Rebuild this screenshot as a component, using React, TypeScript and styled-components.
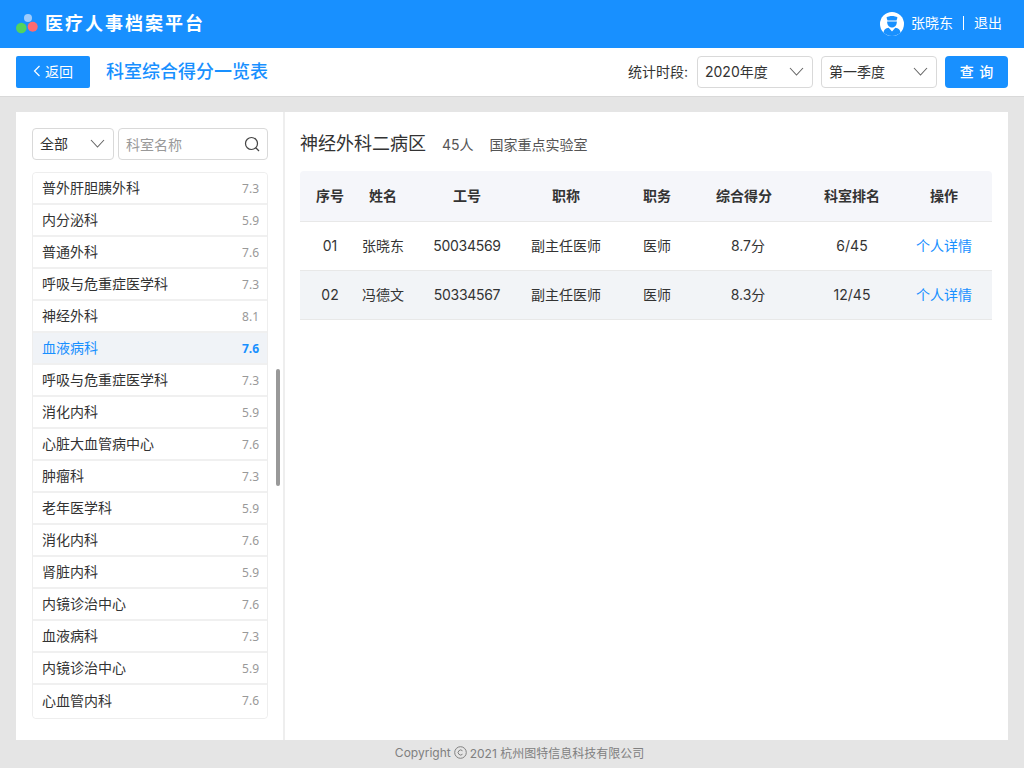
import React from "react";
import styled, { createGlobalStyle } from "styled-components";

const Global = createGlobalStyle`
  html, body { margin: 0; padding: 0; }
  body { width: 1024px; height: 768px; overflow: hidden; background: #e5e5e5; font-family: "Inter", "Noto Sans CJK SC", sans-serif; color: #333; }
  * { box-sizing: border-box; }
`;
const Page = styled.div`display: flex; flex-direction: column; width: 1024px; height: 768px;`;
const Header = styled.header`height: 48px; background: #1890ff; display: flex; align-items: center; justify-content: space-between; padding: 0 22px 0 16px; color: #fff;`;
const Brand = styled.div`display: flex; align-items: center; gap: 5px;`;
const BrandName = styled.span`font-size: 18px; font-weight: 700; letter-spacing: 2px; line-height: 24px;`;
const User = styled.div`display: flex; align-items: center; font-size: 14px; line-height: 22px;`;
const UserName = styled.span`margin: 0 0 2px 7px;`;
const LogoutText = styled.span`margin-bottom: 2px;`;
const Sep = styled.span`width: 1px; height: 14px; background: #fff; margin: 0 10px 2px 10px;`;
const SubBar = styled.div`height: 49px; background: #fff; border-bottom: 1px solid #d9d9d9; display: flex; align-items: center; padding: 0 16px 1px; `;
const BackButton = styled.button`width: 74px; height: 32px; background: #1890ff; border: 0; border-radius: 2px; color: #fff; font: inherit; font-size: 14px; display: flex; align-items: center; justify-content: center; gap: 4px; padding: 0 0 2px;`;
const PageTitle = styled.h1`margin: 0 0 3px 16px; font-size: 18px; font-weight: 500; color: #1890ff; flex: 1;`;
const FilterLabel = styled.span`font-size: 14px; color: #333; margin: 0 9px 2px 0;`;
const SelectBox = styled.div<{ $w: number; $mr?: number }>`
  width: ${p => p.$w}px; height: 32px; border: 1px solid #d9d9d9; border-radius: 4px; background: #fff;
  display: flex; align-items: center; justify-content: space-between; padding: 0 8px 2px 7px; font-size: 14px; color: #333;
  margin-right: ${p => p.$mr ?? 0}px; flex: none;
`;
const QueryButton = styled.button`width: 63px; height: 32px; margin-left: 8px; background: #1890ff; border: 0; border-radius: 4px; color: #fff; font: inherit; font-size: 14px; font-weight: 500; padding: 0 0 2px; word-spacing: 2px;`;
const Main = styled.main`flex: 1; padding: 15px 16px 0; display: flex; min-height: 0;`;
const Panel = styled.div`flex: 1; background: #fff; display: flex;`;
const Side = styled.aside`border-right: 2px solid #eeeeee; width: 269px; padding: 16px 0 0 16px; display: flex; flex-direction: column;`;
const SideFilters = styled.div`display: flex; gap: 4px; width: 236px; margin-bottom: 12px;`;
const SearchBox = styled.div`flex: 1; height: 32px; border: 1px solid #d9d9d9; border-radius: 4px; display: flex; align-items: center; justify-content: space-between; padding: 0 7px 1px; font-size: 14px; color: #999;`;
const ListArea = styled.div`display: flex;`;
const List = styled.ul`list-style: none; margin: 0; padding: 0; width: 236px; border: 1px solid #eeeeee; border-radius: 4px;`;
const Item = styled.li<{ $active?: boolean }>`
  height: 32px; display: flex; align-items: center; justify-content: space-between; padding: 0 8px 2px 9px;
  border-bottom: 2px solid #f0f0f0; font-size: 14px;
  background: ${p => (p.$active ? "#f0f3f7" : "#fff")};
  color: ${p => (p.$active ? "#1890ff" : "#333")};
  &:last-child { height: 33px; border-bottom: 0; padding-bottom: 4px; border-radius: 0 0 4px 4px; }
  &:first-child { border-radius: 4px 4px 0 0; }
`;
const Score = styled.span<{ $active?: boolean }>`font-family: "Noto Sans", sans-serif; font-size: 12px; margin-top: 2px; font-weight: ${p => (p.$active ? 700 : 400)}; color: ${p => (p.$active ? "#1890ff" : "#999")};`;
const Rail = styled.div`width: 4px; height: 117px; margin: 197px 0 0 8px; border-radius: 2px; background: #999;`;
const Content = styled.section`flex: 1; padding: 16px 16px 0 15px;`;
const DeptHead = styled.div`display: flex; align-items: baseline; height: 32px; margin-bottom: 11px; line-height: 32px;`;
const DeptName = styled.h2`margin: 0; font-size: 18px; font-weight: 400; color: #333;`;
const DeptCount = styled.span`font-size: 14px; margin-left: 16px; color: #555;`;
const DeptTag = styled.span`font-size: 14px; margin-left: 16px; color: #555;`;
const columns = "60px 46px 122px 76px 106px 68px 118px 96px";
const HeadRow = styled.div`display: grid; grid-template-columns: ${columns}; height: 51px; padding-bottom: 2px; align-items: center; background: #f5f6fa; border-bottom: 1px solid #e8e8e8; border-radius: 4px 4px 0 0; font-size: 14px; font-weight: 700; color: #333;`;
const Row = styled.div<{ $alt?: boolean }>`display: grid; grid-template-columns: ${columns}; height: 49px; padding-bottom: 2px; align-items: center; background: ${p => (p.$alt ? "#f2f4f7" : "#fff")}; border-bottom: 1px solid #e8e8e8; font-size: 14px; color: #333;`;
const Cell = styled.div<{ $score?: boolean; $num?: boolean }>`
  text-align: center; white-space: nowrap; justify-self: center;
  padding-left: ${p => (p.$score ? 8 : 0)}px;
  letter-spacing: ${p => (p.$num ? "-0.3px" : "normal")};
  &:nth-child(7) { padding-left: 30px; }
`;
const Link = styled.a`color: #1890ff; `;
const Footer = styled.footer`height: 28px; display: flex; align-items: center; justify-content: center; font-size: 12px; color: #808080; gap: 3px; padding: 0 0 4px 15px;`;

const Chevron = ({ size = 16 }: { size?: number }) => (
  <svg width={size} height={size} viewBox="0 0 16 16" fill="none" stroke="#666" strokeWidth="1.1"><path d="M2 5l6.500 7L15 5" /></svg>
);
const SearchIcon = () => (
  <svg width="16" height="16" viewBox="0 0 16 16" fill="none" stroke="#444" strokeWidth="1.2"><circle cx="7.500" cy="7.500" r="6" /><path d="m12 12 3 3" /></svg>
);
const Logo = () => (
  <svg width="24" height="24" viewBox="0 0 24 24"><circle cx="12" cy="6" r="4" fill="#9ecbfc" /><circle cx="5.300" cy="16" r="5.300" fill="#52d35e" /><circle cx="16.700" cy="14.700" r="5" fill="#ff6b6f" /></svg>
);
const Avatar = () => (
  <svg width="24" height="24" viewBox="0 0 24 24">
    <circle cx="12" cy="12" r="12" fill="#fff" />
    <path d="M6.500 5.500C9 3.500 15 3.500 17.500 5.500L16.500 8.500h-9z" fill="#1890ff" />
    <path d="M7.200 9.500h9.600c.3 3.400-1.900 6-4.800 6s-5.100-2.600-4.800-6z" fill="#1890ff" />
    <path d="M3.500 20.500c.2-2.700 2-4.100 5.200-4.700L12 19.500l3.300-3.700c3.200.6 5 2 5.200 4.700A12 12 0 0 1 12 24a12 12 0 0 1-8.500-3.500z" fill="#1890ff" />
  </svg>
);
const BackArrow = () => (
  <svg width="8" height="12" viewBox="0 0 8 12" fill="none" stroke="#fff" strokeWidth="1.2"><path d="M6.500 1 1.500 6l5 5" /></svg>
);

const items: [string, string][] = [
  ["普外肝胆胰外科", "7.3"], ["内分泌科", "5.9"], ["普通外科", "7.6"], ["呼吸与危重症医学科", "7.3"], ["神经外科", "8.1"],
  ["血液病科", "7.6"], ["呼吸与危重症医学科", "7.3"], ["消化内科", "5.9"], ["心脏大血管病中心", "7.6"], ["肿瘤科", "7.3"],
  ["老年医学科", "5.9"], ["消化内科", "7.6"], ["肾脏内科", "5.9"], ["内镜诊治中心", "7.6"], ["血液病科", "7.3"],
  ["内镜诊治中心", "5.9"], ["心血管内科", "7.6"],
];
const heads = ["序号", "姓名", "工号", "职称", "职务", "综合得分", "科室排名", "操作"];
const rows = [
  ["01", "张晓东", "50034569", "副主任医师", "医师", "8.7分", "6/45"],
  ["02", "冯德文", "50334567", "副主任医师", "医师", "8.3分", "12/45"],
];

export default function App() {
  return (
    <Page>
      <Global />
      <Header>
        <Brand><Logo /><BrandName>医疗人事档案平台</BrandName></Brand>
        <User><Avatar /><UserName>张晓东</UserName><Sep /><LogoutText>退出</LogoutText></User>
      </Header>
      <SubBar>
        <BackButton><BackArrow />返回</BackButton>
        <PageTitle>科室综合得分一览表</PageTitle>
        <FilterLabel>统计时段:</FilterLabel>
        <SelectBox $w={116} $mr={8}>2020年度<Chevron /></SelectBox>
        <SelectBox $w={116}>第一季度<Chevron /></SelectBox>
        <QueryButton>查 询</QueryButton>
      </SubBar>
      <Main>
        <Panel>
          <Side>
            <SideFilters>
              <SelectBox $w={82}>全部<Chevron /></SelectBox>
              <SearchBox>科室名称<SearchIcon /></SearchBox>
            </SideFilters>
            <ListArea>
              <List>
                {items.map(([n, s], i) => (
                  <Item key={i} $active={i === 5}>{n}<Score $active={i === 5}>{s}</Score></Item>
                ))}
              </List>
              <Rail />
            </ListArea>
          </Side>
          <Content>
            <DeptHead>
              <DeptName>神经外科二病区</DeptName>
              <DeptCount>45人</DeptCount>
              <DeptTag>国家重点实验室</DeptTag>
            </DeptHead>
            <HeadRow>{heads.map(h => <Cell key={h}>{h}</Cell>)}</HeadRow>
            {rows.map((r, i) => (
              <Row key={i} $alt={i === 1}>
                {r.map((c, j) => <Cell key={j} $num={j === 2} $score={j === 5}>{c}</Cell>)}
                <Cell><Link>个人详情</Link></Cell>
              </Row>
            ))}
          </Content>
        </Panel>
      </Main>
      <Footer>Copyright <svg width="13" height="13" viewBox="0 0 13 13" fill="none" stroke="#808080"><circle cx="6.500" cy="6.500" r="5.800" /><path d="M8.500 4.800a2.500 2.500 0 1 0 0 3.400" /></svg> 2021 杭州图特信息科技有限公司</Footer>
    </Page>
  );
}
